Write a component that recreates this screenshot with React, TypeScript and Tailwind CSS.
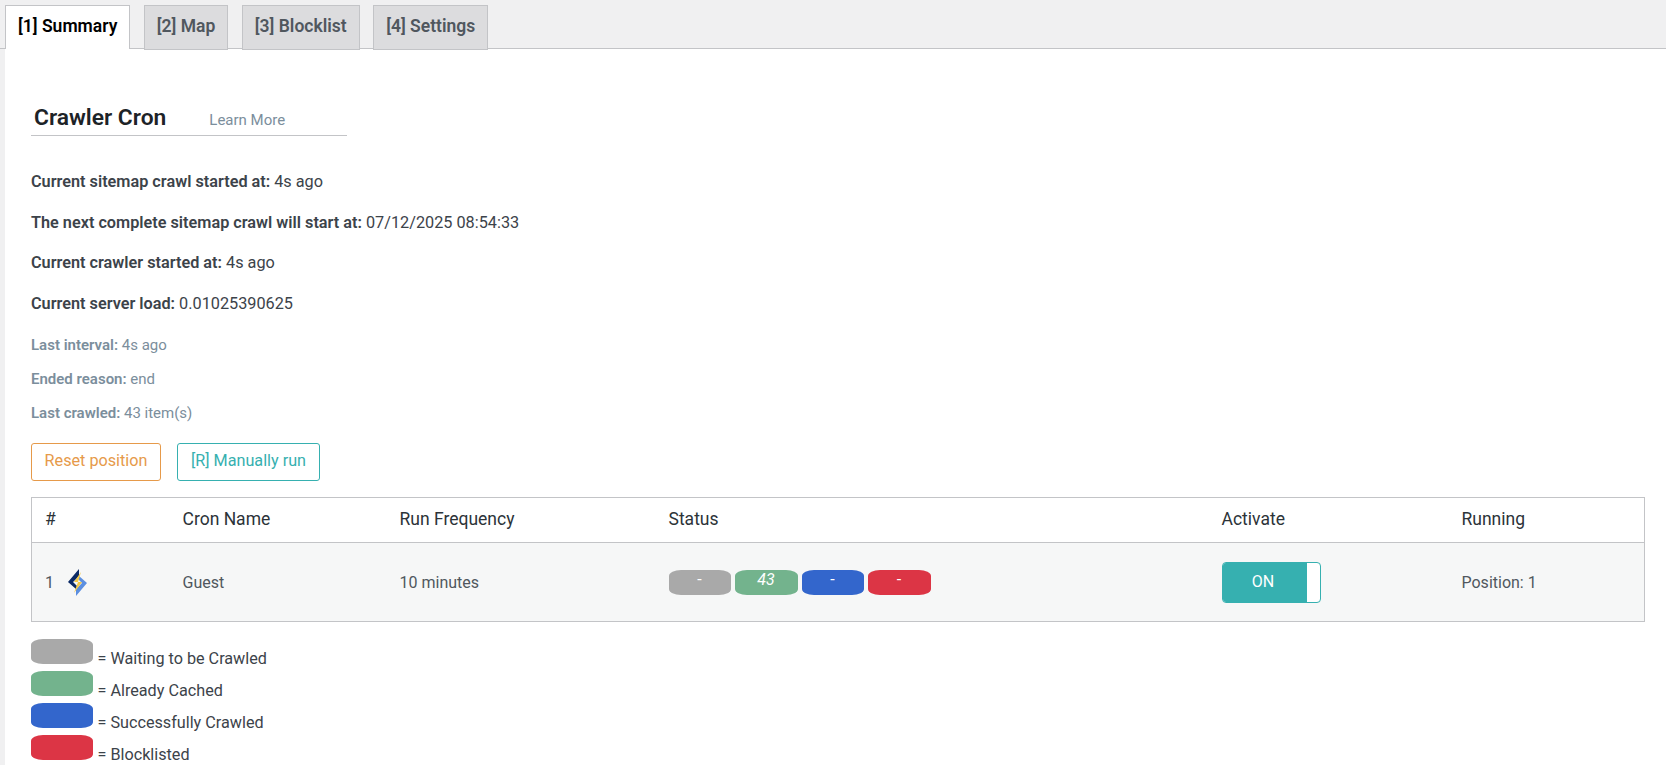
import React from 'react';

const tabs = ['[1] Summary', '[2] Map', '[3] Blocklist', '[4] Settings'];

const legend = [
  { color: 'bg-[#a9a9a9]', label: '= Waiting to be Crawled' },
  { color: 'bg-[#73b38d]', label: '= Already Cached' },
  { color: 'bg-[#3366cc]', label: '= Successfully Crawled' },
  { color: 'bg-[#dc3545]', label: '= Blocklisted' },
];

const LiteSpeedLogo = () => (
  <svg width="20" height="27" viewBox="0 0 20 27">
    <path d="M11 0 L11 7 L5 13 L9 17 L8 20 L0 13 Z" fill="#0b2a66" />
    <path d="M8 27 L8 20 L14 14 L10 10 L11 7 L19 14 Z" fill="#5c8fe0" />
    <path d="M13 3 L6 13 L10 13 L6 24 L14 13 L10 13 Z" fill="#f4c94a" />
  </svg>
);

export default function App() {
  return (
    <div className="h-[765px] overflow-hidden bg-[#f0f0f1] font-['Roboto',sans-serif] text-[#3c434a]">
      <div className="relative flex h-[49px] items-start gap-[13.5px] pl-[5px] pt-[5px]">
        <div className="absolute bottom-0 left-0 right-0 border-b border-[#c3c4c7]" />
        {tabs.map((tab, i) => (
          <div
            key={tab}
            className={
              i === 0
                ? 'relative z-10 flex h-[44px] items-center border border-b-0 border-[#c3c4c7] bg-white px-[12px] pb-[2px] text-[17.5px] font-semibold text-black'
                : 'relative z-10 flex h-[45px] items-center border border-[#c3c4c7] bg-[#dcdcde] px-[12px] pb-[2px] text-[17.5px] font-semibold text-[#50575e]'
            }
          >
            {tab}
          </div>
        ))}
      </div>

      <div className="ml-[5px] h-[716px] bg-white pl-[26px] pr-[21px]">
        <div className="flex h-[87px] w-[316px] items-end border-b border-[#c3c4c7] pb-[2px] pl-[3px]">
          <h1 className="text-[22.8px] font-semibold leading-[30px] text-[#1d2327]">Crawler Cron</h1>
          <a className="mb-[1px] ml-[43px] text-[15px] leading-[24px] text-[#7b8e9c]">Learn More</a>
        </div>

        <div className="mt-[34px] flex flex-col gap-[16.5px] text-[16.25px] leading-[24px]">
          <p><b className="font-semibold">Current sitemap crawl started at:</b> 4s ago</p>
          <p><b className="font-semibold">The next complete sitemap crawl will start at:</b> 07/12/2025 08:54:33</p>
          <p><b className="font-semibold">Current crawler started at:</b> 4s ago</p>
          <p><b className="font-semibold">Current server load:</b> 0.01025390625</p>
        </div>

        <div className="mt-[18px] flex flex-col gap-[12px] text-[15px] leading-[22px] text-[#7b8e9c]">
          <p><b className="font-semibold">Last interval:</b> 4s ago</p>
          <p><b className="font-semibold">Ended reason:</b> end</p>
          <p><b className="font-semibold">Last crawled:</b> 43 item(s)</p>
        </div>

        <div className="mt-[19px] flex gap-[16px] text-[16.2px]">
          <button className="h-[38px] w-[130px] rounded-[3px] border border-[#e69a4a] text-[#e69a4a]">Reset position</button>
          <button className="h-[38px] w-[143px] rounded-[3px] border border-[#36b0b0] text-[#36b0b0]">[R] Manually run</button>
        </div>

        <table className="mt-[16px] w-[1614px] table-fixed border border-[#c3c4c7] text-[17.5px]">
          <colgroup>
            <col className="w-[138px]" />
            <col className="w-[217px]" />
            <col className="w-[269px]" />
            <col className="w-[553px]" />
            <col className="w-[240px]" />
            <col />
          </colgroup>
          <thead>
            <tr className="h-[45px] border-b border-[#c3c4c7] text-left text-[#2c3338]">
              <th className="pl-[13px] font-normal">#</th>
              <th className="pl-[13px] font-normal">Cron Name</th>
              <th className="pl-[13px] font-normal">Run Frequency</th>
              <th className="pl-[13px] font-normal">Status</th>
              <th className="pl-[13px] font-normal">Activate</th>
              <th className="pl-[13px] font-normal">Running</th>
            </tr>
          </thead>
          <tbody>
            <tr className="h-[79px] bg-[#f6f7f7] text-[16px] text-[#50575e]">
              <td className="pl-[13px] pt-[2px]">
                <div className="flex items-center gap-[14px]">
                  <span>1</span>
                  <LiteSpeedLogo />
                </div>
              </td>
              <td className="pl-[13px] pt-[2px]">Guest</td>
              <td className="pl-[13px] pt-[2px]">10 minutes</td>
              <td className="pl-[13px] pt-[2px]">
                <div className="flex gap-[4px] text-[16px] leading-[20px] text-white">
                  <span className="h-[25px] w-[62px] rounded-[12px/6px] bg-[#a9a9a9] text-center">-</span>
                  <span className="h-[25px] w-[63px] rounded-[12px/6px] bg-[#73b38d] text-center italic">43</span>
                  <span className="h-[25px] w-[62px] rounded-[12px/6px] bg-[#3366cc] text-center">-</span>
                  <span className="h-[25px] w-[63px] rounded-[12px/6px] bg-[#dc3545] text-center">-</span>
                </div>
              </td>
              <td className="pl-[13px] pt-[2px]">
                <div className="flex h-[41px] w-[99px] overflow-hidden rounded-[4px] border border-[#36b0b0] bg-white">
                  <div className="flex w-[84px] items-center justify-center bg-[#36b0b0] pb-[1px] pr-[3px] text-[16px] text-white">ON</div>
                </div>
              </td>
              <td className="pl-[13px] pt-[2px]">Position: 1</td>
            </tr>
          </tbody>
        </table>

        <div className="mt-[17px] flex flex-col gap-[7.33px] text-[16.2px] leading-[20px]">
          {legend.map((item) => (
            <div key={item.label} className="flex h-[25px] items-start gap-[4.5px]">
              <span className={`h-[25px] w-[62px] shrink-0 rounded-[12px/6px] ${item.color}`} />
              <span className="mt-[10px]">{item.label}</span>
            </div>
          ))}
        </div>
      </div>
    </div>
  );
}
